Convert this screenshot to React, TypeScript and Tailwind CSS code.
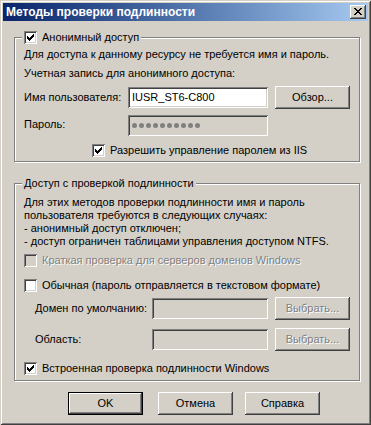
import type { ReactNode } from "react";

const raised =
  "shadow-[inset_-1px_-1px_0_#404040,inset_1px_1px_0_#ffffff,inset_-2px_-2px_0_#808080,inset_2px_2px_0_#d4d0c8]";
const sunken =
  "shadow-[inset_1px_1px_0_#808080,inset_-1px_-1px_0_#ffffff,inset_2px_2px_0_#404040,inset_-2px_-2px_0_#d4d0c8]";
const etched = "border border-[#808080] shadow-[1px_1px_0_#ffffff,inset_1px_1px_0_#ffffff]";
const greyText = "text-[#808080] [text-shadow:1px_1px_0_#ffffff]";

function CheckBox({ checked, disabled }: { checked?: boolean; disabled?: boolean }) {
  return (
    <span
      className={`flex w-[13px] h-[13px] shrink-0 items-center justify-center ${
        disabled ? "bg-[#d4d0c8]" : "bg-white"
      } ${sunken}`}
    >
      {checked && (
        <svg width="7" height="7" viewBox="0 0 7 7" shapeRendering="crispEdges">
          <path
            d="M6 0h1v1h-1z M5 1h2v1h-2z M0 2h1v1h-1z M4 2h3v1h-3z M0 3h2v1h-2z M3 3h3v1h-3z M0 4h5v1h-5z M1 5h3v1h-3z M2 6h1v1h-1z"
            fill="#000"
          />
        </svg>
      )}
    </span>
  );
}

function Button({
  children,
  isDefault,
  disabled,
  className = "",
}: {
  children: ReactNode;
  isDefault?: boolean;
  disabled?: boolean;
  className?: string;
}) {
  return (
    <div
      className={`flex w-[75px] h-[23px] shrink-0 items-center justify-center bg-[#d4d0c8] ${raised} ${
        isDefault ? "border border-black" : ""
      } ${disabled ? greyText : ""} ${className}`}
    >
      {children}
    </div>
  );
}

function Field({
  children,
  width,
  disabled,
}: {
  children?: ReactNode;
  width: string;
  disabled?: boolean;
}) {
  return (
    <div
      className={`flex h-[21px] shrink-0 items-center pl-[4px] ${width} ${
        disabled ? "bg-[#d4d0c8]" : "bg-white"
      } ${sunken}`}
    >
      {children}
    </div>
  );
}

function CheckRow({
  label,
  checked,
  disabled,
  className = "",
}: {
  label: string;
  checked?: boolean;
  disabled?: boolean;
  className?: string;
}) {
  return (
    <div className={`flex h-[13px] items-center gap-[5px] ${className}`}>
      <CheckBox checked={checked} disabled={disabled} />
      <span className={`leading-[13px] ${disabled ? greyText : ""}`}>{label}</span>
    </div>
  );
}

export default function App() {
  return (
    <div className="flex w-[371px] h-[425px] flex-col whitespace-nowrap bg-[#d4d0c8] p-[3px] font-['Liberation_Sans',Arial,sans-serif] text-[11px] text-black shadow-[inset_1px_1px_0_#d4d0c8,inset_-1px_-1px_0_#404040,inset_2px_2px_0_#ffffff,inset_-2px_-2px_0_#808080]">
      {/* Title bar */}
      <div className="flex h-[18px] shrink-0 items-center justify-between bg-linear-to-r from-[#0a246a] to-[#a6caf0] pl-[3px] pr-[2px]">
        <span className="text-[12px] font-bold leading-[18px] text-white">Методы проверки подлинности</span>
        <div className={`flex w-[16px] h-[14px] items-center justify-center bg-[#d4d0c8] ${raised}`}>
          <svg width="8" height="7" viewBox="0 0 8 7" shapeRendering="crispEdges" className="mb-[1px]">
            <path
              d="M0 0h2v1h-2z M6 0h2v1h-2z M1 1h2v1h-2z M5 1h2v1h-2z M2 2h4v1h-4z M3 3h2v1h-2z M2 4h4v1h-4z M1 5h2v1h-2z M5 5h2v1h-2z M0 6h2v1h-2z M6 6h2v1h-2z"
              fill="#000"
            />
          </svg>
        </div>
      </div>

      <div className="flex flex-col px-[11px]">
        {/* Anonymous access */}
        <fieldset className={`mt-[9px] px-[9px] pb-[4px] ${etched}`}>
          <legend className="-ml-[2px] bg-[#d4d0c8] px-[2px]">
            <span className="flex h-[15px] items-center gap-[5px]">
              <CheckBox checked />
              <span>Анонимный доступ</span>
            </span>
          </legend>
          <div className="pt-[3px] leading-[13px]">
            Для доступа к данному ресурсу не требуется имя и пароль.
          </div>
          <div className="mt-[6px] leading-[13px]">Учетная запись для анонимного доступа:</div>
          <div className="mt-[6px] flex h-[23px] items-center">
            <span className="w-[104px] shrink-0">Имя пользователя:</span>
            <Field width="w-[140px]">IUSR_ST6-C800</Field>
            <Button className="ml-[7px]">Обзор...</Button>
          </div>
          <div className="mt-[6px] flex h-[21px]">
            <span className="w-[104px] shrink-0 pt-[1px]">Пароль:</span>
            <Field width="w-[140px]" disabled>
              <div className="flex gap-[2px]">
                {Array.from({ length: 10 }).map((_, i) => (
                  <span key={i} className="block w-[5px] h-[5px] rounded-full bg-[#808080]" />
                ))}
              </div>
            </Field>
          </div>
          <CheckRow className="mt-[8px] pl-[68px]" checked label="Разрешить управление паролем из IIS" />
        </fieldset>

        {/* Authenticated access */}
        <fieldset className={`mt-[14px] px-[9px] pb-[5px] ${etched}`}>
          <legend className="-ml-[2px] bg-[#d4d0c8] px-[2px] leading-[15px]">
            Доступ с проверкой подлинности
          </legend>
          <p className="pt-[5px] leading-[13px]">
            Для этих методов проверки подлинности имя и пароль
            <br />
            пользователя требуются в следующих случаях:
            <br />
            - анонимный доступ отключен;
            <br />- доступ ограничен таблицами управления доступом NTFS.
          </p>
          <CheckRow className="mt-[6px]" disabled label="Краткая проверка для серверов доменов Windows" />
          <CheckRow className="mt-[12px]" label="Обычная (пароль отправляется в текстовом формате)" />
          <div className="mt-[5px] flex h-[23px] items-center pl-[11px]">
            <span className="w-[117px] shrink-0">Домен по умолчанию:</span>
            <Field width="w-[116px]" disabled />
            <Button className="ml-[7px]" disabled>
              Выбрать...
            </Button>
          </div>
          <div className="mt-[8px] flex h-[23px] items-center pl-[11px]">
            <span className="w-[117px] shrink-0">Область:</span>
            <Field width="w-[116px]" disabled />
            <Button className="ml-[7px]" disabled>
              Выбрать...
            </Button>
          </div>
          <CheckRow className="mt-[11px]" checked label="Встроенная проверка подлинности Windows" />
        </fieldset>
      </div>

      {/* Dialog buttons */}
      <div className="mt-[11px] flex pl-[65px]">
        <Button isDefault>OK</Button>
        <Button className="ml-[15px]">Отмена</Button>
        <Button className="ml-[12px]">Справка</Button>
      </div>
    </div>
  );
}
